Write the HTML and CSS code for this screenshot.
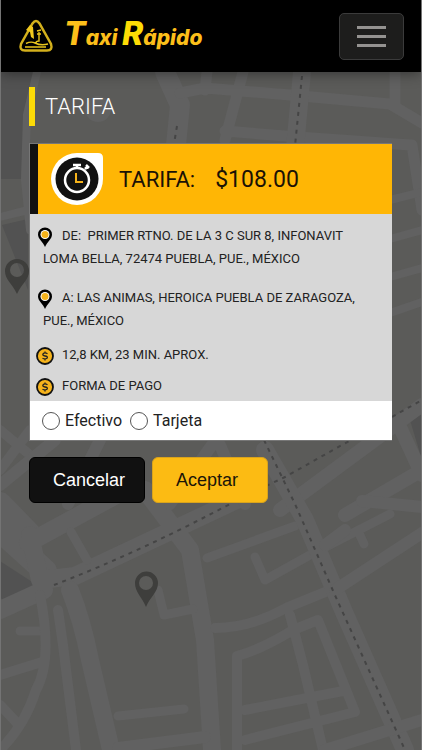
FILE: index.html
```html
<!DOCTYPE html>
<html lang="es">
<head>
<meta charset="utf-8">
<meta name="viewport" content="width=device-width, initial-scale=1">
<title>Taxi Rápido</title>
<link rel="stylesheet" href="styles.css">
</head>
<body>
<svg class="map" viewBox="0 0 422 750" preserveAspectRatio="xMidYMid slice" aria-hidden="true">
  <g class="map-dark">
    <path d="M0 72H34L24 118L21 179H0Z"/>
    <path d="M2 225L28 219V290Z"/>
    <path d="M0 561L40 587L9 602L0 598Z"/>
    <path d="M410 420L422 414V460Z"/>
  </g>
  <g class="roads">
    <path stroke-width="8" d="M37 72L27 115L25 180L30 230M0 217L28 210"/>
    <path stroke-width="20" d="M165 72L180 105L176 145"/>
    <path stroke-width="11" d="M180 93L205 88L290 95L390 104L422 123M205 90L207 72M243 72L225 140M225 131L285 136L410 145M395 103V72M412 145L422 210"/>
    <path stroke-width="18" d="M302 72L295 148"/>
    <path stroke-width="8" d="M390 200L422 192M390 239L422 230M390 277L422 268M390 313L422 302"/>
    <path stroke-width="14" d="M280 510L422 405M399 425L422 475M345 515L422 470"/>
    <path stroke-width="10" d="M0 470L30 430M0 430L30 455"/>
    <path stroke-width="24" d="M0 530L45 571M0 504L30 535"/>
    <path stroke-width="18" d="M28 543L120 493M44 590L0 610M30 535L40 580L75 576L245 496M145 490L190 550L205 640L212 750"/>
    <path stroke-width="9" d="M71 532L87 560M207 558L295 526M255 557L265 580L310 555L390 514M359 533L364 544M20 631H42M158 590L164 615L193 609M118 716L184 709"/>
    <path stroke-width="10" d="M58 610L63 645L76 750M40 595Q53 660 36 690Q25 725 0 750M0 675L42 662M0 705L18 724M215 628Q250 628 286 608L335 588M237 750V656Q260 650 293 630L318 620L355 712L245 740M290 615L303 665L323 750M245 710L343 691"/>
    <path stroke-width="18" d="M70 590Q82 620 90 660L111 750"/>
    <path stroke-width="18" d="M265 450L305 520L344 612L405 750"/>
    <path stroke-width="12" d="M335 590L422 533M118 748L205 737M325 750L422 720M325 545L345 530"/>
    <path stroke-width="12" d="M170 504L212 445M68 504L100 440M0 485L55 440M245 504L220 445"/>
    <path stroke-width="12" d="M362 501L422 507"/>
  </g>
  <circle cx="98" cy="109" r="13" class="map-round"/>
  <g class="dashes">
    <path d="M302 76L295 146M177 126L174 144M54 585Q145 550 245 496L285 477L422 400M264 440L295 504L334 593L405 750"/>
  </g>
  <path class="map-pin" fill-rule="evenodd" d="M17 294C12 283 5 280 5 271A12 12 0 0 1 29 271C29 280 22 283 17 294ZM17 263A7 7 0 1 0 17 277A7 7 0 1 0 17 263Z"/>
  <path class="map-pin" fill-rule="evenodd" d="M146 607C142 597 135 592 135 583A11 11 0 0 1 158 583C158 592 150 597 146 607ZM146 576A7 7 0 1 0 146 590A7 7 0 1 0 146 576Z"/>
</svg>

<header class="topbar">
  <a class="brand" href="#">
    <svg class="brand-mark" viewBox="0 0 36 34" aria-hidden="true">
      <path class="mark-frame" d="M14.500 4.500Q18 -.5 21.500 4.500L33 25Q35 31.500 29 31.500H7Q1 31.500 3 25Z"/>
      <path class="mark-line" d="M8 24.500Q13 22 17 24Q23 27 30 25M18 24Q18 22 21 22V13M19 12L23 11M19 15H23M7 28H28"/>
      <path class="mark-fill" d="M8 11L12 6L15 8L16 20L13 18L12 13Z"/>
    </svg>
    <span class="brand-name"><span class="cap">T</span>axi <span class="cap cap-r">R</span>ápido</span>
  </a>
  <button class="menu" type="button" aria-label="Menú"><span></span><span></span><span></span></button>
</header>

<main class="page">
  <h1 class="title">TARIFA</h1>

  <form class="fare">
    <section class="card">
      <div class="card-head">
        <svg class="watch" viewBox="0 0 54 54" aria-hidden="true">
          <path fill="#fff" d="M27 1H48Q53 1 53 6V27A26 26 0 1 1 27 1Z"/>
          <circle cx="27" cy="27" r="21.500" fill="#111"/>
          <circle cx="27" cy="28" r="12" fill="none" stroke="#fff" stroke-width="2.500"/>
          <path d="M27 16V13M23 13H31M35 17L38 14M36 13L39 16" fill="none" stroke="#fff" stroke-width="2.500"/>
          <path d="M26 21V30H33" fill="none" stroke="#f5b21a" stroke-width="2"/>
        </svg>
        <h2>TARIFA:</h2>
        <strong>$108.00</strong>
      </div>
      <div class="details">
        <p class="place"><svg class="icon" viewBox="0 0 18 20" aria-hidden="true"><path d="M9 20C7 15 2 12 2 7.500A7 7 0 0 1 16 7.500C16 12 11 15 9 20Z"/><circle cx="9" cy="7.500" r="4.500" fill="#fff"/><circle cx="9" cy="7.500" r="3.500" fill="#f6b31b"/></svg>DE:&nbsp; PRIMER RTNO. DE LA 3 C SUR 8, INFONAVIT<br>LOMA BELLA, 72474 PUEBLA, PUE., MÉXICO</p>
        <p class="place"><svg class="icon" viewBox="0 0 18 20" aria-hidden="true"><path d="M9 20C7 15 2 12 2 7.500A7 7 0 0 1 16 7.500C16 12 11 15 9 20Z"/><circle cx="9" cy="7.500" r="4.500" fill="#fff"/><circle cx="9" cy="7.500" r="3.500" fill="#f6b31b"/></svg>A: LAS ANIMAS, HEROICA PUEBLA DE ZARAGOZA,<br>PUE., MÉXICO</p>
        <p><svg class="icon" viewBox="0 0 18 20" aria-hidden="true"><circle cx="9" cy="10" r="8" fill="#f6b31b" stroke="#111" stroke-width="1.800"/><path class="coin-sign" d="M11.500 7.800Q9 6.200 7.300 7.500C6 9 7.500 9.800 9 10C11 10.300 12 11 11 12.300Q9 13.600 6.500 12.200M9 5.500V7M9 13V14.500"/></svg>12,8 KM, 23 MIN. APROX.</p>
        <p><svg class="icon" viewBox="0 0 18 20" aria-hidden="true"><circle cx="9" cy="10" r="8" fill="#f6b31b" stroke="#111" stroke-width="1.800"/><path class="coin-sign" d="M11.500 7.800Q9 6.200 7.300 7.500C6 9 7.500 9.800 9 10C11 10.300 12 11 11 12.300Q9 13.600 6.500 12.200M9 5.500V7M9 13V14.500"/></svg>FORMA DE PAGO</p>
      </div>
      <div class="payment">
        <label><input type="radio" name="pago" value="efectivo">Efectivo</label>
        <label><input type="radio" name="pago" value="tarjeta">Tarjeta</label>
      </div>
    </section>
    <div class="actions">
      <button class="btn cancel" type="button">Cancelar</button>
      <button class="btn accept" type="submit">Aceptar</button>
    </div>
  </form>
</main>
</body>
</html>
```
FILE: styles.css
```css
* {
  box-sizing: border-box;
}

body {
  margin: 0;
  min-height: 100vh;
  position: relative;
  overflow-x: hidden;
  background: #5b5b59;
  border: solid #747474;
  border-width: 0 1px;
  color: #222;
  font-family: Roboto, "Noto Sans", sans-serif;
}

.map {
  position: absolute;
  inset: 0;
  z-index: -1;
  width: 100%;
  height: 100%;
}

.map-dark {
  fill: #525252;
}

.roads {
  fill: none;
  stroke: #616161;
  stroke-linecap: round;
  stroke-linejoin: round;
}

.map-round {
  fill: #616161;
}

.dashes {
  fill: none;
  stroke: #454545;
  stroke-width: 2;
  stroke-dasharray: 4 5;
}

.map-pin {
  fill: #3e3e3c;
}

.topbar {
  display: flex;
  align-items: center;
  justify-content: space-between;
  height: 72px;
  padding: 0 17px;
  background: #000;
  box-shadow: 0 2px 12px rgba(0, 0, 0, 0.4);
}

.brand {
  display: flex;
  align-items: center;
  gap: 10px;
  text-decoration: none;
}

.brand-mark {
  width: 36px;
  height: 34px;
  fill: none;
}

.mark-frame {
  stroke: #d3b01c;
  stroke-width: 2.5;
}

.mark-line {
  stroke: #e9c51d;
  stroke-width: 1.4;
}

.mark-fill {
  fill: #f0c81e;
}

.brand-name {
  color: #fcbf1a;
  font-family: Inter, Roboto, sans-serif;
  font-size: 21px;
  font-style: italic;
  font-weight: 800;
  line-height: 32px;
}

.cap {
  font-size: 32px;
}

.cap-r {
  color: #fddc05;
}

.menu {
  display: flex;
  flex-direction: column;
  align-items: center;
  justify-content: center;
  gap: 6px;
  width: 65px;
  height: 47px;
  padding: 0;
  background: #1d1d1c;
  border: 1px solid #3b3b3b;
  border-radius: 5px;
}

.menu span {
  width: 29px;
  height: 3px;
  background: #949290;
}

.page {
  padding: 15px 29px 15px 28px;
}

.title {
  margin: 0 0 17px;
  padding-left: 10px;
  border-left: 6px solid #fcdb07;
  color: #fff;
  font-size: 22px;
  font-weight: 300;
  line-height: 39px;
}

.card {
  margin-bottom: 16px;
  border: solid #777;
  border-width: 1px 0 1px 1px;
  background: #fff;
}

.card-head {
  display: flex;
  align-items: center;
  height: 70px;
  padding-left: 12px;
  border-left: 8px solid #111;
  background: #ffb605;
  color: #1a1205;
  font-size: 23px;
}

.watch {
  width: 54px;
  height: 54px;
  margin-right: 15px;
}

.card-head h2 {
  margin: 0 20px 0 0;
  font-size: 22px;
  font-weight: 400;
}

.card-head strong {
  font-weight: 400;
}

.details {
  padding: 10px 8px 4px 13px;
  background: #d7d7d7;
  font-size: 13px;
  line-height: 23px;
}

.details p {
  margin: 0 0 8px;
  text-indent: -7px;
}

.details .place {
  margin-bottom: 16px;
}

.details .place + .place {
  margin-bottom: 11px;
}

.details p:last-child {
  margin-bottom: 0;
}

.icon {
  width: 18px;
  height: 20px;
  margin-right: 8px;
  vertical-align: middle;
}

.coin-sign {
  fill: none;
  stroke: #222;
  stroke-width: 1.3;
}

.payment {
  display: flex;
  gap: 8px;
  height: 39px;
  padding-left: 12px;
  font-size: 16px;
}

.payment label {
  display: flex;
  align-items: center;
  gap: 5px;
}

.payment input {
  appearance: none;
  width: 18px;
  height: 18px;
  margin: 0;
  border: 1px solid #555;
  border-radius: 50%;
  background: #fff;
}

.payment input:checked {
  border: 5px solid #111;
}

.actions {
  display: flex;
  gap: 7px;
}

.btn {
  width: 116px;
  height: 46px;
  padding: 0 0 0 23px;
  border: 1px solid #000;
  border-radius: 6px;
  font-family: "Liberation Sans", Arial, sans-serif;
  font-size: 18px;
  text-align: left;
}

.cancel {
  background: #111;
  color: #fff;
}

.accept {
  background: #fcbb13;
  border-color: #d9a31c;
  color: #1a1508;
}
```
